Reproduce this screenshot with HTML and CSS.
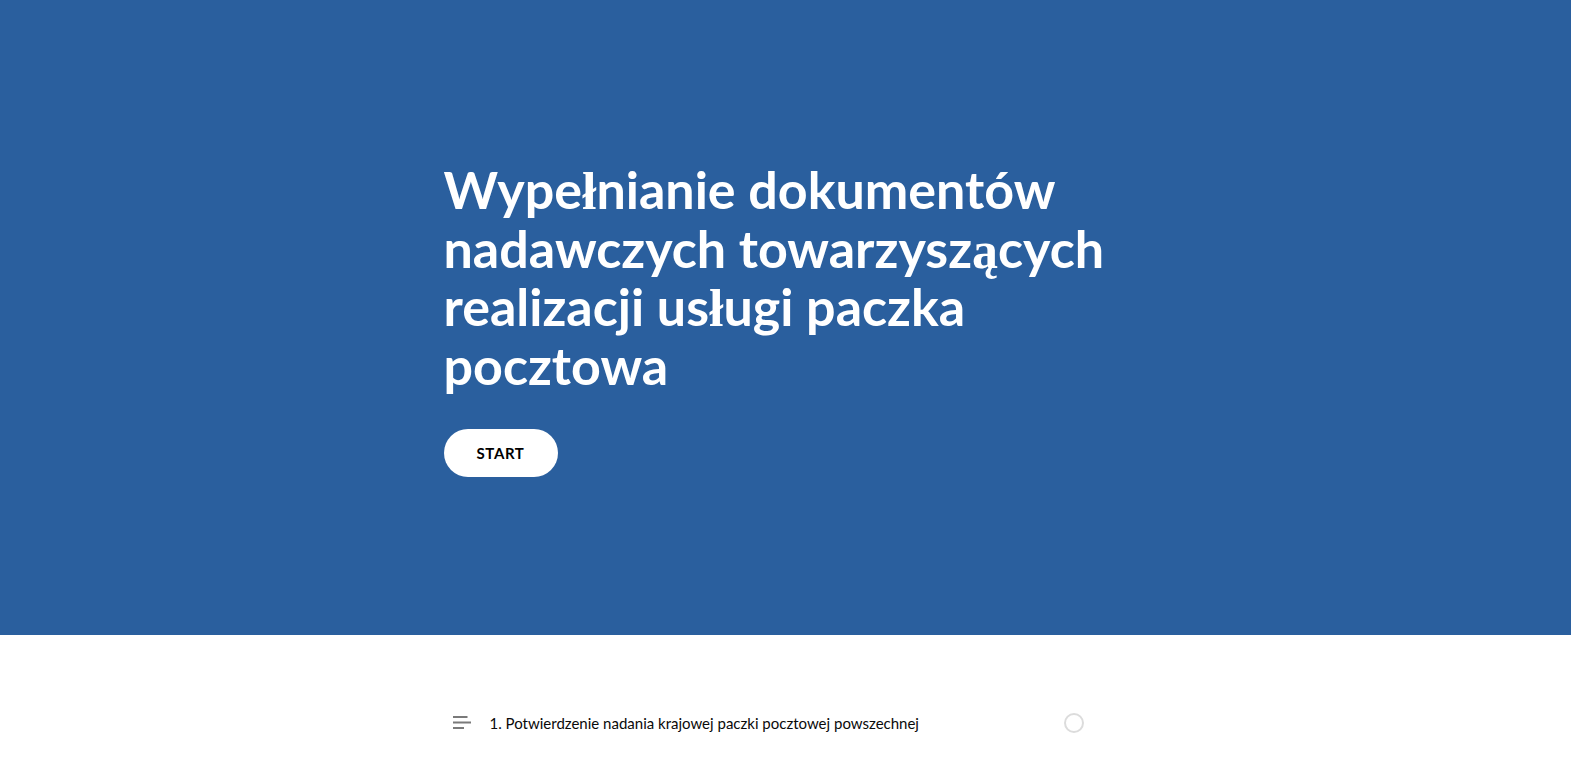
FILE: index.html
```html
<!DOCTYPE html>
<html lang="pl">
<head>
<meta charset="utf-8">
<title>Wypełnianie dokumentów nadawczych</title>
<link rel="stylesheet" href="styles.css">
</head>
<body>
<section class="hero">
  <div class="container">
    <h1 class="title">Wype<span class="fb">ł</span>nianie dokumentów nadawczych towarzysz<span class="fb">ą</span>cych realizacji us<span class="fb">ł</span>ugi paczka pocztowa</h1>
    <button class="start" type="button">START</button>
  </div>
</section>
<section class="content">
  <div class="container">
    <ul class="steps">
      <li class="step">
        <svg class="step-icon" width="20" height="16" viewBox="0 0 20 16" aria-hidden="true">
          <rect x="1" y="1" width="14.5" height="2" fill="#7a7a7a"/>
          <rect x="1" y="6.5" width="18" height="2" fill="#7a7a7a"/>
          <rect x="1" y="12" width="11" height="2" fill="#7a7a7a"/>
        </svg>
        <span class="step-label">1. Potwierdzenie nadania krajowej paczki pocztowej powszechnej</span>
        <span class="step-status" aria-hidden="true"></span>
      </li>
    </ul>
  </div>
</section>
</body>
</html>
```
FILE: styles.css
```css
html, body {
  margin: 0;
  padding: 0;
}
body {
  font-family: Lato, "Noto Sans", sans-serif;
  background: #ffffff;
  color: #111111;
}
.container {
  width: 684px;
  margin: 0 auto;
}
.hero {
  background: #2a5f9e;
  height: 635px;
  box-sizing: border-box;
  padding-top: 160px;
}
.title {
  margin: 0;
  color: #ffffff;
  font-size: 52px;
  line-height: 58.5px;
  font-weight: 700;
}
.fb {
  font-family: "Liberation Serif", serif;
  font-weight: 700;
  line-height: 0;
}
.start {
  display: block;
  margin-top: 35px;
  height: 48px;
  width: 114px;
  border: none;
  border-radius: 24px;
  background: #ffffff;
  color: #000000;
  font-family: Lato, "Noto Sans", sans-serif;
  font-weight: 700;
  font-size: 15px;
  letter-spacing: 0.6px;
  padding: 0;
  cursor: pointer;
}
.content {
  padding-top: 64px;
}
.steps {
  list-style: none;
  margin: 0;
  padding: 0;
  width: 640px;
}
.step {
  display: flex;
  align-items: center;
  height: 48px;
}
.step-icon {
  margin-left: 8px;
  flex: none;
}
.step-label {
  margin-left: 18px;
  font-size: 15px;
  color: #0a0a0a;
  flex: 1;
}
.step-status {
  width: 16px;
  height: 16px;
  border: 2px solid #dcdcdc;
  border-radius: 50%;
  flex: none;
}
```
